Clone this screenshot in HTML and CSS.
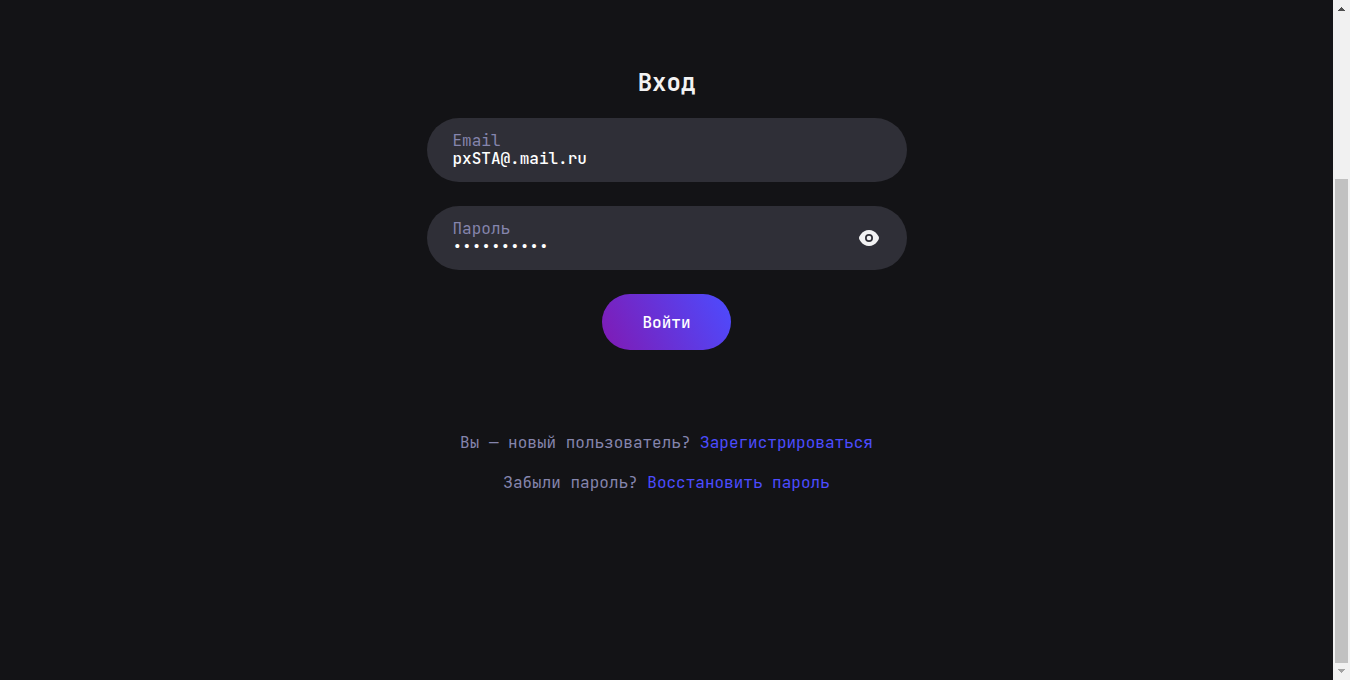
FILE: index.html
```html
<!DOCTYPE html>
<html lang="ru">
<head>
<meta charset="utf-8">
<title>Вход</title>
<link rel="stylesheet" href="styles.css">
</head>
<body>
<div class="viewport">
  <main class="page">
    <form class="form">
      <h1 class="form-title">Вход</h1>
      <div class="field">
        <div class="field-body">
          <label class="field-label" for="email">Email</label>
          <input class="field-input" id="email" type="text" value="pxSTA@.mail.ru">
        </div>
      </div>
      <div class="field">
        <div class="field-body">
          <label class="field-label" for="password">Пароль</label>
          <input class="field-input" id="password" type="password" value="1234567890">
        </div>
        <button class="reveal" type="button" aria-label="Показать пароль">
          <svg viewBox="0 0 24 24" width="24" height="24" fill="#f2f2f3" fill-rule="evenodd"><path d="M12 4C8.600 4 5.700 5.700 3.700 8.500L2.500 10.300C1.850 11.400 1.850 12.600 2.500 13.700L3.700 15.500C5.700 18.300 8.600 20 12 20C15.400 20 18.300 18.300 20.300 15.500L21.500 13.700C22.150 12.600 22.150 11.400 21.500 10.300L20.300 8.500C18.300 5.700 15.400 4 12 4ZM12 8A4 4 0 1 1 12 16A4 4 0 1 1 12 8ZM12 9.700A2.300 2.300 0 1 0 12 14.300A2.300 2.300 0 1 0 12 9.700Z"/></svg>
        </button>
      </div>
      <button class="submit" type="button">Войти</button>
    </form>
    <p class="hint">Вы — новый пользователь? <a class="link" href="#register">Зарегистрироваться</a></p>
    <p class="hint">Забыли пароль? <a class="link" href="#restore">Восстановить пароль</a></p>
  </main>
  <div class="scrollbar" aria-hidden="true">
    <svg class="arrow" viewBox="0 0 17 17" width="17" height="17" fill="#505050"><path d="M5 11V10H6V9H7V8H8V7H9V8H10V9H11V10H12V11Z"/></svg>
    <div class="track"><div class="thumb"></div></div>
    <svg class="arrow" viewBox="0 0 17 17" width="17" height="17" fill="#a3a3a3"><path d="M5 6H12V7H11V8H10V9H9V10H8V9H7V8H6V7H5Z"/></svg>
  </div>
</div>
</body>
</html>
```
FILE: styles.css
```css
* {
  box-sizing: border-box;
}

body {
  margin: 0;
  background: #131316;
  color: #f2f2f3;
  font: 400 16px/24px "JetBrains Mono", "DejaVu Sans Mono", "Liberation Mono", monospace;
}

.viewport {
  display: grid;
  grid-template-columns: 1fr 17px;
  min-height: 100vh;
}

.page {
  display: flex;
  flex-direction: column;
  align-items: center;
  gap: 16px;
  padding: 68px 24px 24px;
}

.form {
  display: flex;
  flex-direction: column;
  align-items: center;
  gap: 24px;
  width: 100%;
  max-width: 480px;
  margin-bottom: 65px;
}

.form-title {
  margin: 0 0 -4px;
  font-size: 24px;
  line-height: 30px;
  font-weight: 700;
}

.field {
  display: flex;
  align-items: center;
  width: 100%;
  height: 64px;
  padding: 0 26px;
  border-radius: 32px;
  background: #2f2f37;
}

.field-body {
  display: flex;
  flex: 1;
  flex-direction: column;
}

.field-label {
  color: #8585ad;
  line-height: 18px;
}

.field-input {
  width: 100%;
  height: 18px;
  padding: 0;
  border: 0;
  outline: 0;
  background: none;
  color: #fff;
  font: inherit;
  font-weight: 500;
  line-height: 18px;
}

.reveal {
  display: flex;
  padding: 0;
  border: 0;
  background: none;
  cursor: pointer;
}

.submit {
  padding: 17px 40px 15px;
  border: 0;
  border-radius: 28px;
  background: linear-gradient(63deg, #801ab3 0%, #4c4cff 100%);
  color: #fff;
  font: inherit;
  font-weight: 500;
  cursor: pointer;
}

.hint {
  margin: 0;
  color: #8585ad;
}

.link {
  color: #4c4cff;
  text-decoration: none;
}

.scrollbar {
  display: flex;
  flex-direction: column;
  background: #f1f1f1;
}

.arrow {
  display: block;
}

.track {
  display: flex;
  flex: 1;
  flex-direction: column;
  justify-content: flex-end;
  padding: 0 2px;
}

.thumb {
  height: 75%;
  background: #c1c1c1;
}
```
